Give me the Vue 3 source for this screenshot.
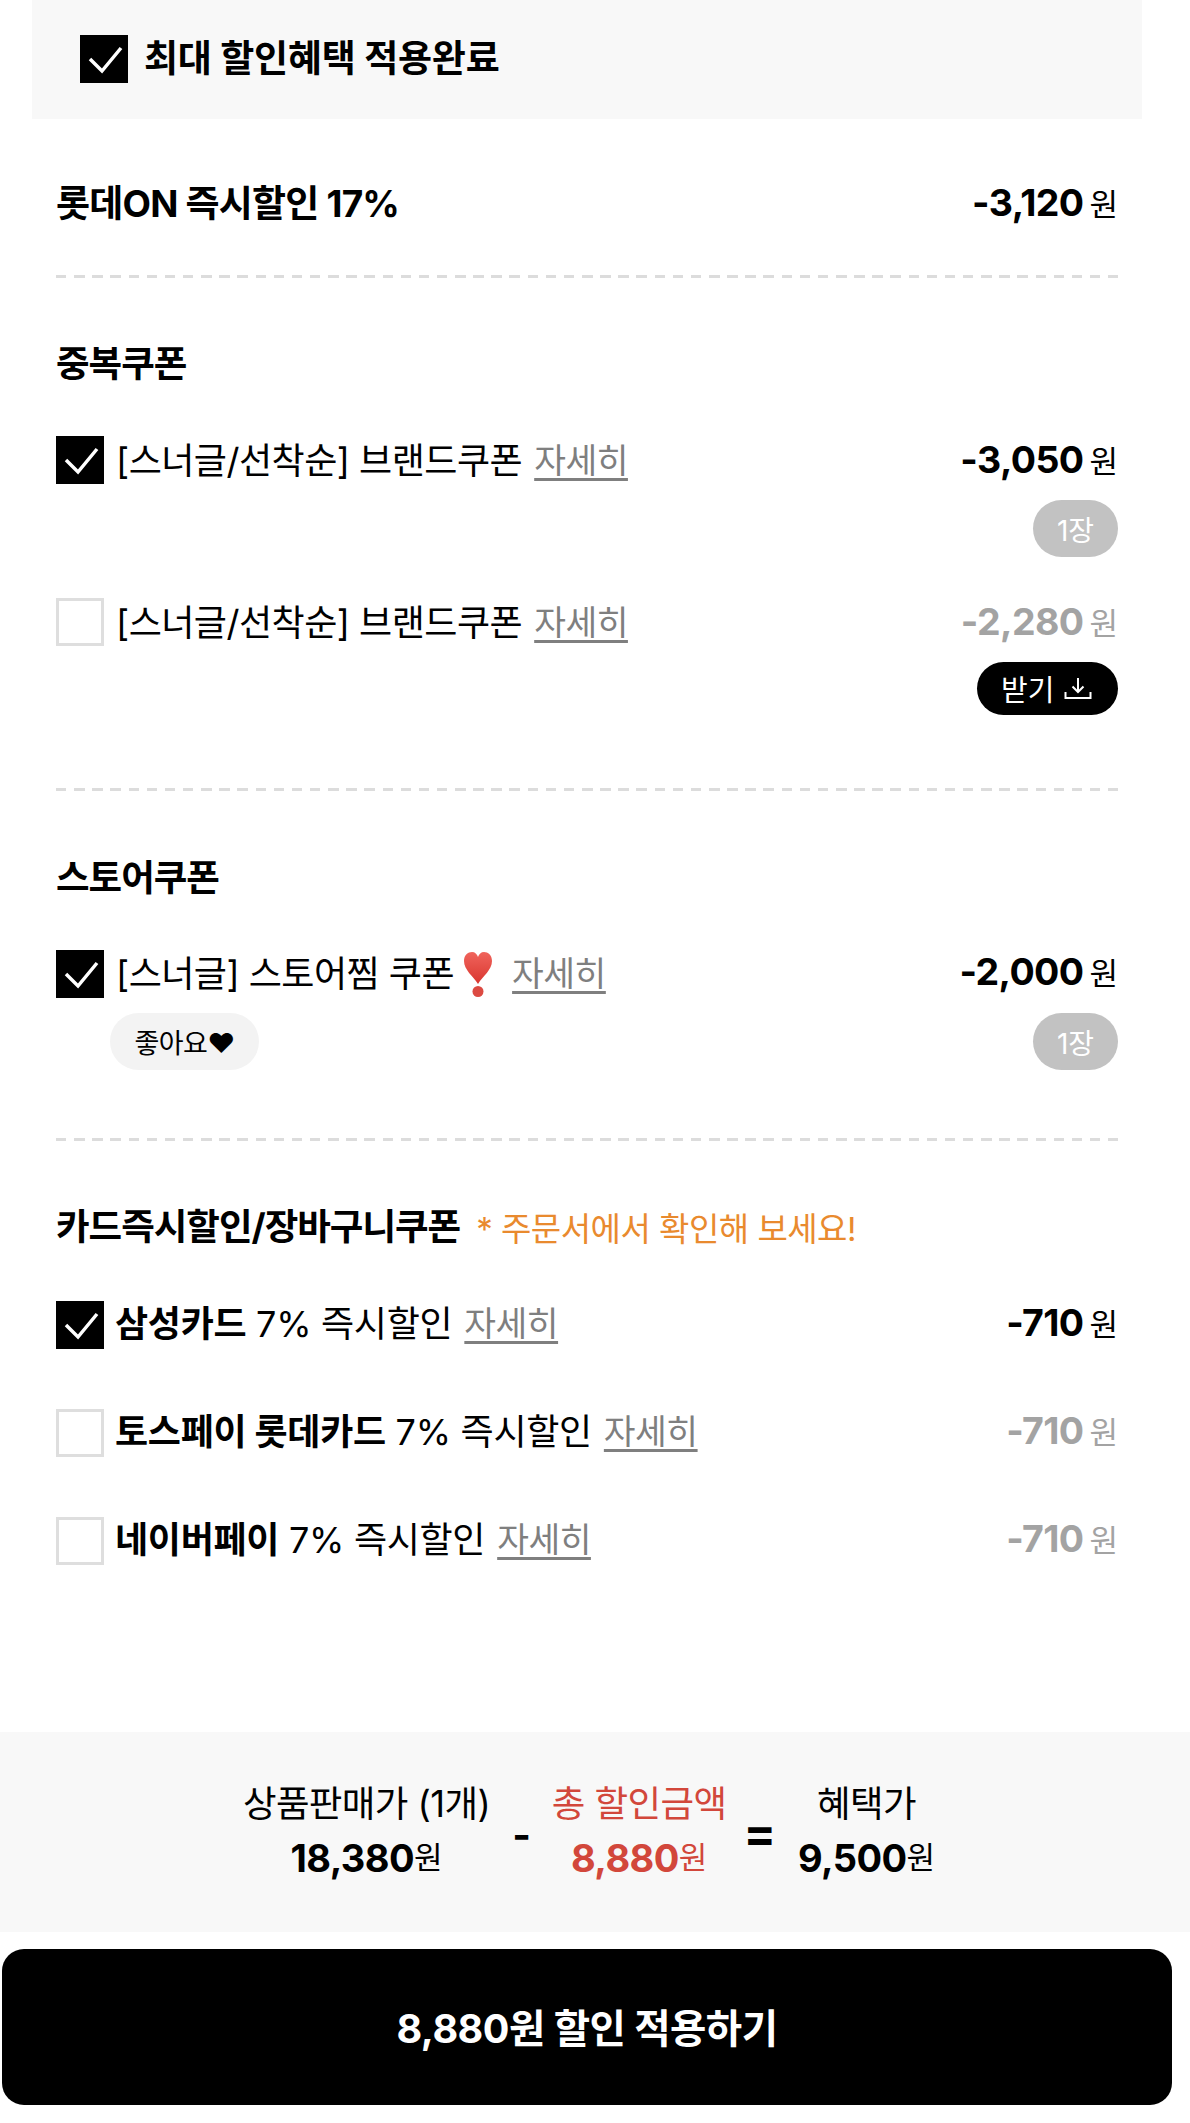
<script setup>
const checkPath = 'M10 24 L22 36 L41 13'

const brandCoupons = [
  { id: 1, checked: true, amount: '-3,050', count: '1장' },
  { id: 2, checked: false, amount: '-2,280', download: true }
]

const cards = [
  { id: 1, name: '삼성카드', checked: true },
  { id: 2, name: '토스페이 롯데카드', checked: false },
  { id: 3, name: '네이버페이', checked: false }
]
</script>

<template>
  <div class="page">
    <div class="top">
      <span class="box on">
        <svg viewBox="0 0 48 48"><path :d="checkPath" /></svg>
      </span>
      <span class="top-label">최대 할인혜택 적용완료</span>
    </div>

    <div class="content">
      <section class="sec first">
        <div class="row">
          <h2 class="title">롯데ON 즉시할인 17%</h2>
          <div class="price"><b>-3,120</b><span>원</span></div>
        </div>
      </section>

      <section class="sec coupons">
        <h2 class="title">중복쿠폰</h2>
        <div v-for="c in brandCoupons" :key="c.id" class="coupon">
          <div class="row">
            <div class="left">
              <span class="box" :class="{ on: c.checked }">
                <svg v-if="c.checked" viewBox="0 0 48 48"><path :d="checkPath" /></svg>
              </span>
              <span class="name">[스너글/선착순] 브랜드쿠폰</span>
              <a class="more">자세히</a>
            </div>
            <div class="price" :class="{ off: !c.checked }"><b>{{ c.amount }}</b><span>원</span></div>
          </div>
          <div class="sub">
            <span v-if="c.count" class="count">{{ c.count }}</span>
            <button v-if="c.download" class="down">
              받기
              <svg viewBox="0 0 28 28">
                <path d="M14 4 V18 M8.500 12.500 L14 18 L19.500 12.500 M1.500 18 V24 H26.500 V18" />
              </svg>
            </button>
          </div>
        </div>
      </section>

      <section class="sec store">
        <h2 class="title">스토어쿠폰</h2>
        <div class="coupon">
          <div class="row">
            <div class="left">
              <span class="box on">
                <svg viewBox="0 0 48 48"><path :d="checkPath" /></svg>
              </span>
              <span class="name">[스너글] 스토어찜 쿠폰</span>
              <svg class="heart" viewBox="0 0 32 46">
                <defs>
                  <linearGradient id="heartFill" x1="0" y1="0" x2="0" y2="1">
                    <stop offset="0" stop-color="#f0645c" />
                    <stop offset="1" stop-color="#d9362f" />
                  </linearGradient>
                </defs>
                <path fill="url(#heartFill)" d="M16 33 C11 25 2 19 2 10 C2 4 6 1 10 1 C13 1 15 3 16 6 C17 3 19 1 22 1 C26 1 30 4 30 10 C30 19 21 25 16 33 Z" />
                <circle cx="16" cy="40.500" r="5.500" fill="#dc4a42" />
              </svg>
              <a class="more">자세히</a>
            </div>
            <div class="price"><b>-2,000</b><span>원</span></div>
          </div>
          <div class="sub between">
            <span class="tag">좋아요♥</span>
            <span class="count">1장</span>
          </div>
        </div>
      </section>

      <section class="sec cards">
        <div class="title-line">
          <h2 class="title">카드즉시할인/장바구니쿠폰</h2>
          <span class="hint">* 주문서에서 확인해 보세요!</span>
        </div>
        <div v-for="card in cards" :key="card.id" class="row card">
          <div class="left">
            <span class="box" :class="{ on: card.checked }">
              <svg v-if="card.checked" viewBox="0 0 48 48"><path :d="checkPath" /></svg>
            </span>
            <span class="name"><b>{{ card.name }}</b> 7% 즉시할인</span>
            <a class="more">자세히</a>
          </div>
          <div class="price" :class="{ off: !card.checked }"><b>-710</b><span>원</span></div>
        </div>
      </section>
    </div>

    <div class="summary">
      <div class="col">
        <span class="col-label">상품판매가 (1개)</span>
        <div class="col-val"><b>18,380</b><span>원</span></div>
      </div>
      <span class="op minus">-</span>
      <div class="col red">
        <span class="col-label">총 할인금액</span>
        <div class="col-val"><b>8,880</b><span>원</span></div>
      </div>
      <span class="op equal">=</span>
      <div class="col">
        <span class="col-label">혜택가</span>
        <div class="col-val"><b>9,500</b><span>원</span></div>
      </div>
    </div>

    <button class="apply">8,880원 할인 적용하기</button>
  </div>
</template>

<style>
html, body {
  margin: 0;
  background: #fff;
}
</style>

<style scoped>
.page {
  width: 1190px;
  height: 2123px;
  overflow: hidden;
  display: flex;
  flex-direction: column;
  box-sizing: border-box;
  font-family: Inter, "Noto Sans CJK KR", sans-serif;
  color: #000;
  background: #fff;
}

.top {
  height: 119px;
  margin: 0 48px 0 32px;
  padding: 0 0 2px 48px;
  display: flex;
  align-items: center;
  gap: 4px;
  background: #f8f8f8;
  box-sizing: border-box;
}

.top-label {
  font-size: 37px;
  font-weight: 700;
  letter-spacing: -0.2px;
  padding-bottom: 5px;
}

.content {
  padding: 0 72px 0 56px;
}

.sec {
  background: repeating-linear-gradient(90deg, #dcdcdc 0 10.500px, transparent 10.500px 18.140px) left bottom / 100% 3px no-repeat;
}

.first {
  padding: 60px 0 51px;
}

.coupons {
  padding: 62px 0 76px;
}

.store {
  padding: 63px 0 71px;
}

.cards {
  padding: 62px 0 0;
  background: none;
}

.title {
  margin: 0;
  font-size: 36.500px;
  line-height: 48px;
  font-weight: 700;
  letter-spacing: -1px;
}

.first .title {
  font-size: 37px;
  letter-spacing: -0.800px;
  padding-top: 2px;
}

.title-line {
  display: flex;
  align-items: center;
  gap: 16px;
}

.hint {
  font-size: 33px;
  color: #e98a2e;
  letter-spacing: -0.500px;
}

.row {
  display: flex;
  justify-content: space-between;
  align-items: center;
  height: 48px;
}

.left {
  display: flex;
  align-items: center;
}

.box {
  width: 48px;
  height: 48px;
  flex: none;
  box-sizing: border-box;
  border: 3px solid #dedede;
  margin-right: 12px;
  background: #fff;
}

.box.on {
  border: 0;
  background: #000;
}

.box svg {
  display: block;
  width: 48px;
  height: 48px;
}

.box path {
  fill: none;
  stroke: #fff;
  stroke-width: 3.500;
}

.name {
  font-size: 36px;
  letter-spacing: -0.500px;
  white-space: pre;
  padding-bottom: 5px;
}

.name b {
  font-weight: 700;
}

.store .name,
.store .more {
  padding-bottom: 7px;
}

.card .name {
  letter-spacing: -0.300px;
  padding-bottom: 8px;
  margin-left: -1px;
}

.more {
  margin-left: 12px;
  font-size: 34.500px;
  color: #7f7f7f;
  text-decoration: underline;
  text-underline-offset: 5px;
  text-decoration-thickness: 3px;
  letter-spacing: -0.500px;
  padding-bottom: 5px;
}

.card .more {
  padding-bottom: 8px;
}

.heart {
  width: 32px;
  height: 46px;
  margin: 0 18px 0 8px;
}

.heart + .more {
  margin-left: 0;
}

.price {
  display: flex;
  align-items: center;
  gap: 6px;
  font-size: 31px;
  padding-bottom: 2px;
}

.store .price,
.card .price {
  padding-bottom: 5px;
}

.price b {
  font-size: 37.500px;
  font-weight: 700;
  letter-spacing: -0.600px;
}

.price.off {
  color: #a3a3a3;
}

.coupon {
  margin-top: 48px;
}

.coupon + .coupon {
  margin-top: 41px;
}

.sub {
  display: flex;
  justify-content: flex-end;
  margin-top: 16px;
}

.sub.between {
  justify-content: space-between;
  padding-left: 54px;
  margin-top: 15px;
}

.count {
  display: flex;
  align-items: center;
  justify-content: center;
  width: 85px;
  height: 57px;
  border-radius: 29px;
  background: #c2c2c2;
  color: #fff;
  font-size: 28px;
}

.down {
  display: flex;
  align-items: center;
  gap: 10px;
  width: 141px;
  height: 53px;
  padding: 0 0 2px 24px;
  border: 0;
  border-radius: 27px;
  background: #000;
  color: #fff;
  font-family: inherit;
  font-size: 29px;
}

.down svg {
  width: 28px;
  height: 28px;
  fill: none;
  stroke: #fff;
  stroke-width: 2;
}

.tag {
  display: flex;
  align-items: center;
  justify-content: center;
  width: 149px;
  height: 57px;
  border-radius: 29px;
  background: #f3f3f3;
  font-size: 27px;
  letter-spacing: -0.500px;
}

.card {
  margin-top: 60px;
}

.title-line + .card {
  margin-top: 50px;
}

.summary {
  margin-top: auto;
  height: 200px;
  display: flex;
  align-items: center;
  justify-content: center;
  background: #f8f8f8;
  padding: 0 12px 2px 0;
  box-sizing: border-box;
}

.col {
  display: flex;
  flex-direction: column;
  align-items: center;
  gap: 5px;
}

.col-label {
  font-size: 36.500px;
  line-height: 48px;
  letter-spacing: -0.600px;
}

.col-val {
  display: flex;
  align-items: center;
  line-height: 50px;
  font-size: 31px;
}

.col-val b {
  font-size: 38px;
  font-weight: 700;
  letter-spacing: -0.600px;
}

.red {
  color: #d2473b;
}

.op {
  font-weight: 700;
  font-size: 40px;
}

.minus {
  margin: 6px 21px 0 22px;
}

.equal {
  margin: 2px 22px 0 17px;
  font-size: 48px;
}

.apply {
  flex: none;
  width: 1170px;
  height: 156px;
  margin: 17px 0 18px 2px;
  padding-bottom: 4px;
  border: 0;
  border-radius: 22px;
  background: #000;
  color: #fff;
  font-family: inherit;
  font-size: 39.500px;
  font-weight: 700;
  letter-spacing: -0.500px;
}
</style>
